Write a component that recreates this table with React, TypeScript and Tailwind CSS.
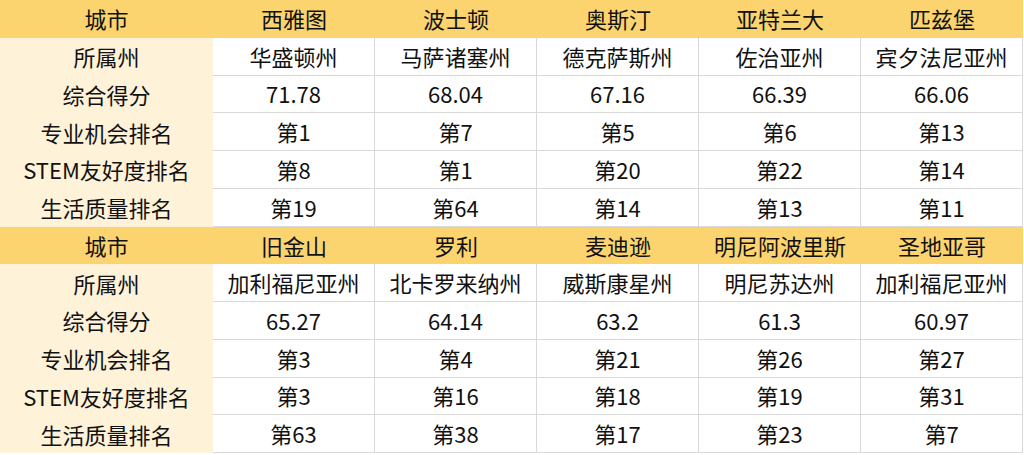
import React from "react";

type Block = {
  cities: string[];
  states: string[];
  scores: string[];
  career: string[];
  stem: string[];
  life: string[];
};

const blocks: Block[] = [
  {
    cities: ["西雅图", "波士顿", "奥斯汀", "亚特兰大", "匹兹堡"],
    states: ["华盛顿州", "马萨诸塞州", "德克萨斯州", "佐治亚州", "宾夕法尼亚州"],
    scores: ["71.78", "68.04", "67.16", "66.39", "66.06"],
    career: ["第1", "第7", "第5", "第6", "第13"],
    stem: ["第8", "第1", "第20", "第22", "第14"],
    life: ["第19", "第64", "第14", "第13", "第11"],
  },
  {
    cities: ["旧金山", "罗利", "麦迪逊", "明尼阿波里斯", "圣地亚哥"],
    states: ["加利福尼亚州", "北卡罗来纳州", "威斯康星州", "明尼苏达州", "加利福尼亚州"],
    scores: ["65.27", "64.14", "63.2", "61.3", "60.97"],
    career: ["第3", "第4", "第21", "第26", "第27"],
    stem: ["第3", "第16", "第18", "第19", "第31"],
    life: ["第63", "第38", "第17", "第23", "第7"],
  },
];

function Row({ label, values, header }: { label: string; values: string[]; header?: boolean }) {
  if (header) {
    return (
      <>
        <div className="h-[37.75px] flex items-center justify-center bg-[#fbd470]">{label}</div>
        {values.map((v, i) => (
          <div key={i} className="h-[37.75px] flex items-center justify-center bg-[#fbd470]">
            {v}
          </div>
        ))}
      </>
    );
  }
  return (
    <>
      <div className="h-[37.75px] flex items-center justify-center bg-[#fef2d9]">{label}</div>
      {values.map((v, i) => (
        <div
          key={i}
          className="h-[37.75px] flex items-center justify-center bg-white border-r border-b border-[#d9d9d9]"
        >
          {v}
        </div>
      ))}
    </>
  );
}

export default function App() {
  return (
    <div
      className="w-[1024px] h-[455px] bg-white overflow-hidden text-[22px] text-[#111111]"
      style={{ fontFamily: '"Noto Sans CJK SC", "Noto Sans", sans-serif' }}
    >
      <div className="grid grid-cols-[213px_repeat(5,162px)]">
        {blocks.map((b, i) => (
          <React.Fragment key={i}>
            <Row header label="城市" values={b.cities} />
            <Row label="所属州" values={b.states} />
            <Row label="综合得分" values={b.scores} />
            <Row label="专业机会排名" values={b.career} />
            <Row label="STEM友好度排名" values={b.stem} />
            <Row label="生活质量排名" values={b.life} />
          </React.Fragment>
        ))}
      </div>
    </div>
  );
}
